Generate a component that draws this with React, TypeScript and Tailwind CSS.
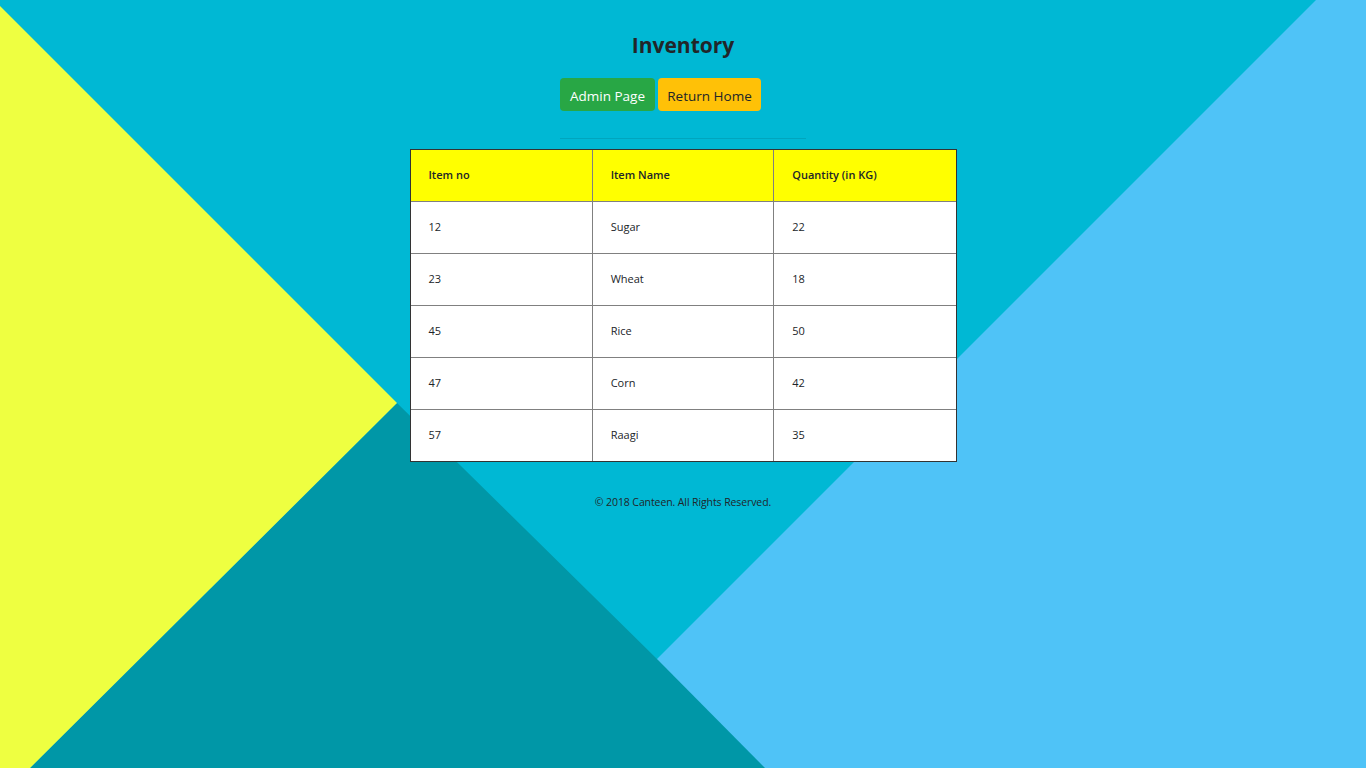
import React from "react";

const items = [
  { no: 12, name: "Sugar", qty: 22 },
  { no: 23, name: "Wheat", qty: 18 },
  { no: 45, name: "Rice", qty: 50 },
  { no: 47, name: "Corn", qty: 42 },
  { no: 57, name: "Raagi", qty: 35 },
];

function Backdrop() {
  return (
    <svg
      className="absolute inset-0 h-full w-full"
      viewBox="0 0 1366 768"
      preserveAspectRatio="none"
    >
      <rect width="1366" height="768" fill="#00b8d4" />
      <polygon points="397,403 30,768 900,768 657,659" fill="#0097a7" />
      <polygon points="0,0 0,6 397,403 30,768 0,768" fill="#eeff41" />
      <polygon points="1316,0 1366,0 1366,768 765,768 657,659" fill="#4fc3f7" />
    </svg>
  );
}

export default function App() {
  return (
    <div className="relative h-[768px] w-full overflow-hidden font-['Open_Sans',sans-serif] text-[#212529]">
      <Backdrop />

      <div className="relative flex flex-col items-center pt-[31px]">
        <h1 className="text-[21px] font-bold leading-[28px] text-[#212529]">Inventory</h1>

        <div className="mt-[19px] w-[246px]">
          <div className="flex gap-[3px]">
            <button className="h-[33px] w-[95px] rounded-[4px] bg-[#28a745] pt-[3px] text-[13.5px] text-white">
              Admin Page
            </button>
            <button className="h-[33px] w-[103px] rounded-[4px] bg-[#ffc107] pt-[3px] text-[13.5px] text-[#212529]">
              Return Home
            </button>
          </div>
          <hr className="mt-[27px] border-t border-black/10" />
        </div>

        <div className="mt-[10px] w-[547px] border border-[#333] bg-white">
          <table className="w-full table-fixed border-collapse border-hidden text-[11px]">
            <thead>
              <tr className="h-[51px] bg-[#ffff00]">
                <th className="border border-[#808080] pl-[18px] text-left font-semibold">Item no</th>
                <th className="border border-[#808080] pl-[18px] text-left font-semibold">Item Name</th>
                <th className="border border-[#808080] pl-[18px] text-left font-semibold">Quantity (in KG)</th>
              </tr>
            </thead>
            <tbody>
              {items.map((it) => (
                <tr key={it.no} className="h-[52px]">
                  <td className="border border-[#808080] pl-[18px]">{it.no}</td>
                  <td className="border border-[#808080] pl-[18px]">{it.name}</td>
                  <td className="border border-[#808080] pl-[18px]">{it.qty}</td>
                </tr>
              ))}
            </tbody>
          </table>
        </div>

        <p className="mt-[33px] text-[10.5px] tracking-[-0.1px]">© 2018 Canteen. All Rights Reserved.</p>
      </div>
    </div>
  );
}
